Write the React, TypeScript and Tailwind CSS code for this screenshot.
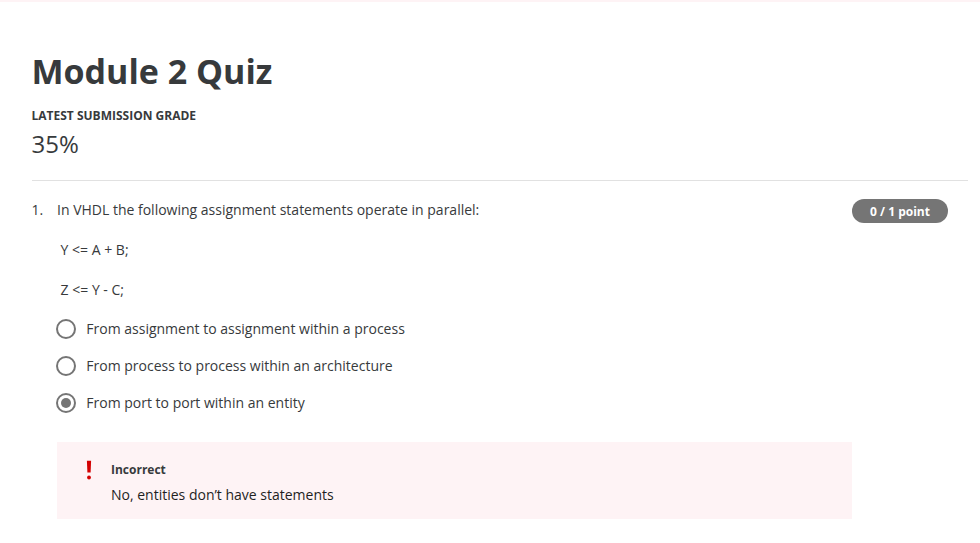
const options = [
  { label: "From assignment to assignment within a process", checked: false },
  { label: "From process to process within an architecture", checked: false },
  { label: "From port to port within an entity", checked: true },
];

function Option({ label, checked }: { label: string; checked: boolean }) {
  return (
    <li className="flex h-[37px] items-center gap-2.5">
      <span className="flex size-5 items-center justify-center rounded-full border-2 border-[#757575]">
        {checked && <span className="size-2.5 rounded-full bg-[#757575]" />}
      </span>
      <span className="pl-[0.3px]">{label}</span>
    </li>
  );
}

export default function App() {
  return (
    <main className="h-[543px] w-[980px] overflow-hidden border-t-2 border-[#fef3f5] bg-white pl-8 pr-3 font-['Open_Sans',sans-serif] text-sm text-[#373a3c]">
      <header className="h-[179px] border-b border-[#e1e1e1] pt-[45px]">
        <h1 className="-ml-[0.5px] text-[34px] leading-[48px] font-bold">Module 2 Quiz</h1>
        <p className="mt-3 -ml-[0.5px] text-xs leading-[18px] font-bold">LATEST SUBMISSION GRADE</p>
        <p className="mt-[3px] -ml-[0.5px] text-2xl leading-8">35%</p>
      </header>
      <section className="flex pt-[18px]">
        <span className="-ml-[0.5px] w-[25.5px] shrink-0 leading-[22px]">1.</span>
        <div className="w-[795px] shrink-0">
          <p className="leading-[22px]">In VHDL the following assignment statements operate in parallel:</p>
          <p className="mt-[18px] pl-[3.6px] leading-[22px]">Y &lt;= A + B;</p>
          <p className="mt-[18px] pl-[3.6px] leading-[22px]">Z &lt;= Y - C;</p>
          <ul className="mt-[9px] -ml-px">
            {options.map((o) => <Option key={o.label} {...o} />)}
          </ul>
          <div className="mt-[21px] flex h-[77px] bg-[#fef3f5] pt-[17px] pl-[29px]">
            <svg width="7" height="21" viewBox="0 0 7 21" className="mt-px shrink-0" fill="#d30001">
              <path d="M.9.8h4.2l-.5 11.8H1.4z" />
              <circle cx="3" cy="17.5" r="1.9" />
            </svg>
            <div className="pl-[18px]">
              <p className="text-xs leading-[22px] font-bold">Incorrect</p>
              <p className="mt-[3px] leading-[22px] text-[#1f1f1f]">No, entities don’t have statements</p>
            </div>
          </div>
        </div>
        <span className="flex h-6 w-24 items-center justify-center rounded-full bg-[#757575] pt-0.5 text-xs font-bold text-white">0 / 1 point</span>
      </section>
    </main>
  );
}
